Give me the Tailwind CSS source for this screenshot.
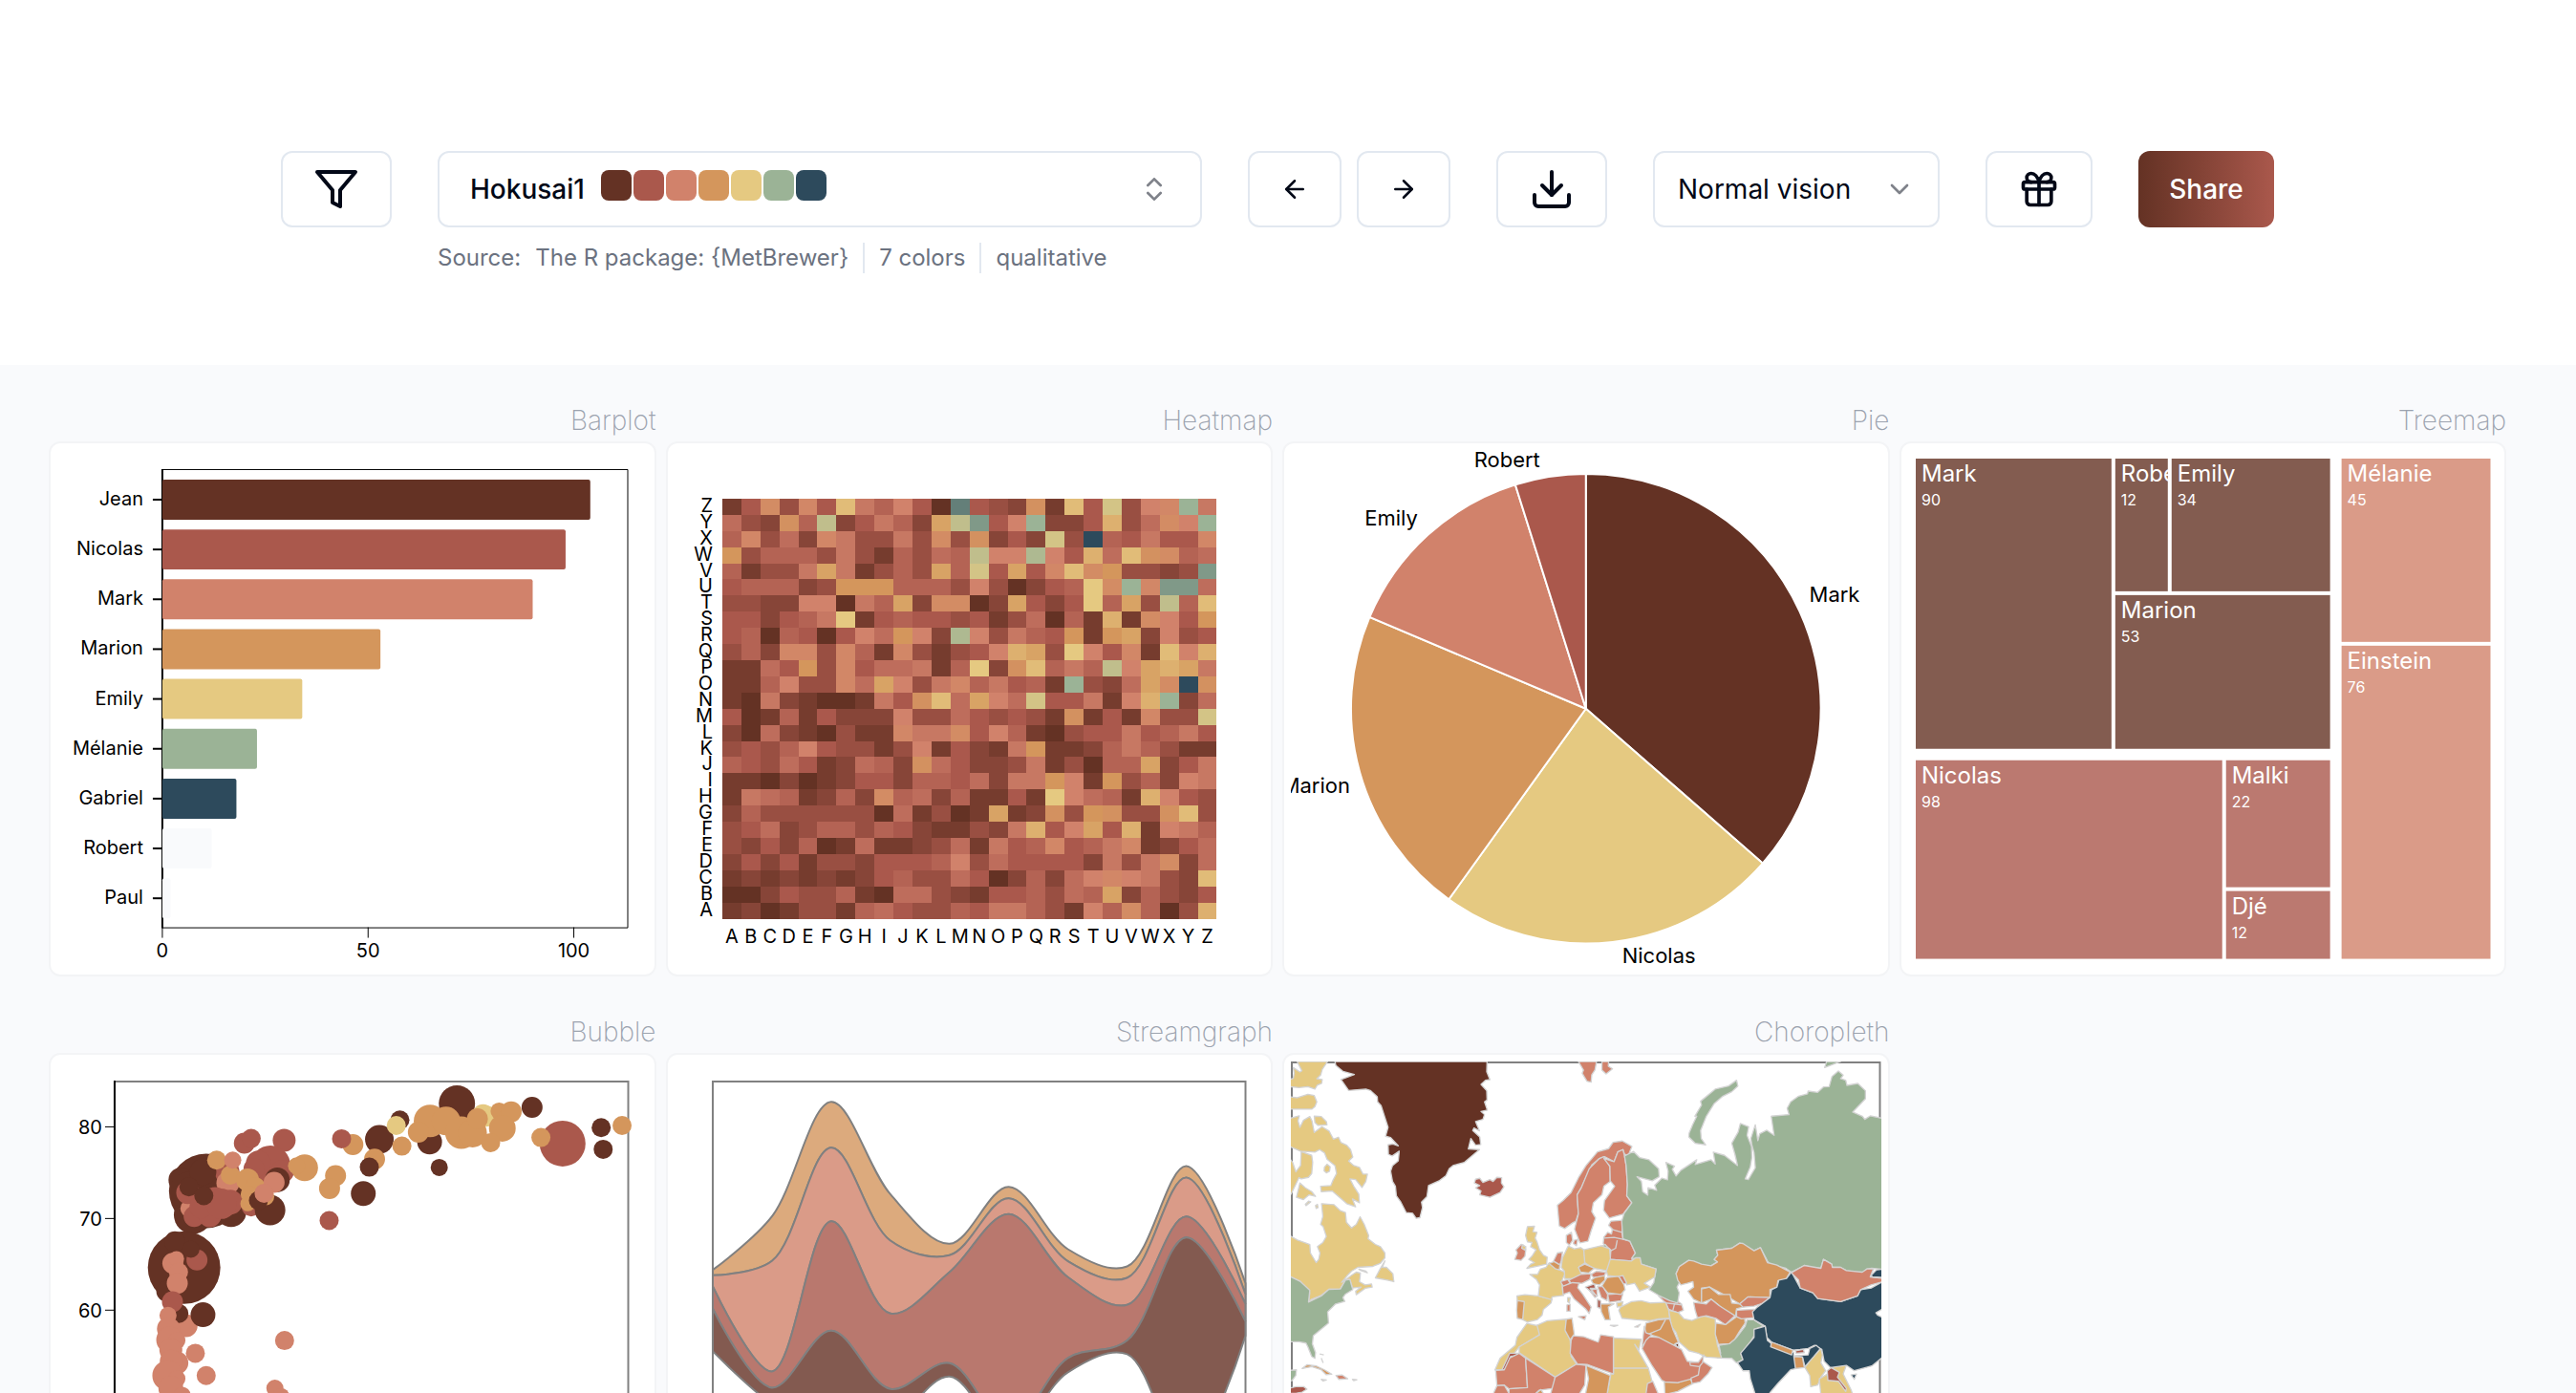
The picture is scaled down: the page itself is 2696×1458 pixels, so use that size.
<!DOCTYPE html>
<html lang="en">
  <head>
    <meta charset="UTF-8" />
    <meta name="viewport" content="width=device-width, initial-scale=1.0" />
    <title>Color Palette Finder - Hokusai1</title>
    <script src="https://cdn.jsdelivr.net/npm/@tailwindcss/browser@4"></script>
  </head>

  <body class="bg-white font-['Inter',sans-serif] text-[#020817]">
    <!-- Toolbar -->
    <header class="flex flex-wrap items-start justify-center gap-12 pt-[158px] pr-[22px] pb-24">
      <button aria-label="Filter palettes" class="flex h-20 w-[116px] items-center justify-center rounded-xl border-2 border-[#e2e8f0]">
        <svg class="size-12" viewBox="0 0 24 24" fill="none" stroke="currentColor" stroke-width="2" stroke-linecap="round" stroke-linejoin="round">
          <polygon points="22 3 2 3 10 12.46 10 19 14 21 14 12.46 22 3" />
        </svg>
      </button>

      <div class="w-[800px] max-w-full">
        <button role="combobox" aria-expanded="false" aria-label="Palette" class="flex h-20 w-full items-center justify-between rounded-xl border-2 border-[#e2e8f0] px-8">
          <span class="flex items-center gap-[17px]">
            <span class="text-[28px] leading-10 font-medium">Hokusai1</span>
            <span class="mb-2 flex gap-[2px]">
              <span class="size-8 rounded-lg bg-[#643224]"></span>
              <span class="size-8 rounded-lg bg-[#aa584c]"></span>
              <span class="size-8 rounded-lg bg-[#d1826b]"></span>
              <span class="size-8 rounded-lg bg-[#d4965c]"></span>
              <span class="size-8 rounded-lg bg-[#e5c981]"></span>
              <span class="size-8 rounded-lg bg-[#9bb396]"></span>
              <span class="size-8 rounded-lg bg-[#2d4a5c]"></span>
            </span>
          </span>
          <svg class="size-8 opacity-50" viewBox="0 0 24 24" fill="none" stroke="currentColor" stroke-width="2" stroke-linecap="round" stroke-linejoin="round">
            <path d="m7 15 5 5 5-5" />
            <path d="m7 9 5-5 5 5" />
          </svg>
        </button>
        <div class="mt-4 flex items-center gap-[15px] text-2xl leading-8 text-[#6b7280]">
          <span>Source:</span>
          <span>The R package: {MetBrewer}</span>
          <span class="h-8 w-[2px] bg-[#e2e8f0]"></span>
          <span>7 colors</span>
          <span class="h-8 w-[2px] bg-[#e2e8f0]"></span>
          <span>qualitative</span>
        </div>
      </div>

      <div class="flex gap-4">
        <button aria-label="Previous palette" class="flex h-20 w-[98px] items-center justify-center rounded-xl border-2 border-[#e2e8f0]">
          <svg class="size-[30px]" viewBox="0 0 24 24" fill="none" stroke="currentColor" stroke-width="2" stroke-linecap="round" stroke-linejoin="round">
            <path d="m12 19-7-7 7-7" />
            <path d="M19 12H5" />
          </svg>
        </button>
        <button aria-label="Next palette" class="flex h-20 w-[98px] items-center justify-center rounded-xl border-2 border-[#e2e8f0]">
          <svg class="size-[30px]" viewBox="0 0 24 24" fill="none" stroke="currentColor" stroke-width="2" stroke-linecap="round" stroke-linejoin="round">
            <path d="M5 12h14" />
            <path d="m12 5 7 7-7 7" />
          </svg>
        </button>
      </div>

      <button aria-label="Export palette" class="flex h-20 w-[116px] items-center justify-center rounded-xl border-2 border-[#e2e8f0]">
        <svg class="size-12" viewBox="0 0 24 24" fill="none" stroke="currentColor" stroke-width="2" stroke-linecap="round" stroke-linejoin="round">
          <path d="M21 15v4a2 2 0 0 1-2 2H5a2 2 0 0 1-2-2v-4" />
          <polyline points="7 10 12 15 17 10" />
          <line x1="12" x2="12" y1="15" y2="3" />
        </svg>
      </button>

      <div class="relative w-[300px]">
        <select aria-label="Color vision" class="h-20 w-full appearance-none rounded-xl border-2 border-[#e2e8f0] bg-white px-6 text-[28px]">
          <option>Normal vision</option>
          <option>Deuteranomaly</option>
          <option>Protanomaly</option>
          <option>Tritanomaly</option>
        </select>
        <svg class="pointer-events-none absolute top-6 right-[26px] size-8 opacity-50" viewBox="0 0 24 24" fill="none" stroke="currentColor" stroke-width="2" stroke-linecap="round" stroke-linejoin="round">
          <path d="m6 9 6 6 6-6" />
        </svg>
      </div>

      <button aria-label="Surprise me" class="flex h-20 w-28 items-center justify-center rounded-xl border-2 border-[#e2e8f0]">
        <svg class="size-11" viewBox="0 0 24 24" fill="none" stroke="currentColor" stroke-width="2" stroke-linecap="round" stroke-linejoin="round">
          <rect x="3" y="8" width="18" height="4" rx="1" />
          <path d="M12 8v13" />
          <path d="M19 12v7a2 2 0 0 1-2 2H7a2 2 0 0 1-2-2v-7" />
          <path d="M7.5 8a2.5 2.5 0 0 1 0-5A4.8 8 0 0 1 12 8a4.8 8 0 0 1 4.5-5 2.5 2.5 0 0 1 0 5" />
        </svg>
      </button>

      <button class="h-20 w-[142px] rounded-xl bg-linear-to-r from-[#643224] to-[#aa584c] text-[28px] font-medium text-white">Share</button>
    </header>

    <!-- Chart gallery -->
    <main class="grid grid-cols-4 gap-x-[10px] gap-y-10 bg-[#f9fafc] pt-10 pr-[73px] pb-10 pl-[51px]">
      <section>
        <h2 class="mb-1 text-right text-[28px] leading-9 font-extralight text-[#9ca3af]">Barplot</h2>
        <div class="rounded-xl border-2 border-[#f3f4f6] bg-white p-[7px]">
          <svg id="barplot" class="block w-full" viewBox="0 0 618 542" font-size="20"></svg>
        </div>
      </section>
      <section>
        <h2 class="mb-1 text-right text-[28px] leading-9 font-extralight text-[#9ca3af]">Heatmap</h2>
        <div class="rounded-xl border-2 border-[#f3f4f6] bg-white p-[7px]">
          <svg id="heatmap" class="block w-full" viewBox="0 0 618 542" font-size="20"></svg>
        </div>
      </section>
      <section>
        <h2 class="mb-1 text-right text-[28px] leading-9 font-extralight text-[#9ca3af]">Pie</h2>
        <div class="rounded-xl border-2 border-[#f3f4f6] bg-white p-[7px]">
          <svg id="pie" class="block w-full" viewBox="0 0 618 542" font-size="22"></svg>
        </div>
      </section>
      <section>
        <h2 class="mb-1 text-right text-[28px] leading-9 font-extralight text-[#9ca3af]">Treemap</h2>
        <div class="rounded-xl border-2 border-[#f3f4f6] bg-white p-[7px]">
          <svg id="treemap" class="block w-full" viewBox="0 0 618 542" fill="white"></svg>
        </div>
      </section>
      <section>
        <h2 class="mb-1 text-right text-[28px] leading-9 font-extralight text-[#9ca3af]">Bubble</h2>
        <div class="rounded-xl border-2 border-[#f3f4f6] bg-white p-[7px]">
          <svg id="bubble" class="block w-full" viewBox="0 0 618 542" font-size="20"></svg>
        </div>
      </section>
      <section>
        <h2 class="mb-1 text-right text-[28px] leading-9 font-extralight text-[#9ca3af]">Streamgraph</h2>
        <div class="rounded-xl border-2 border-[#f3f4f6] bg-white p-[7px]">
          <svg id="streamgraph" class="block w-full" viewBox="0 0 618 542"></svg>
        </div>
      </section>
      <section>
        <h2 class="mb-1 text-right text-[28px] leading-9 font-extralight text-[#9ca3af]">Choropleth</h2>
        <div class="rounded-xl border-2 border-[#f3f4f6] bg-white p-[7px]">
          <svg id="choropleth" class="block w-full" viewBox="0 0 618 542">
            <rect x="1" y="1" width="616" height="540" fill="none" stroke="#808080" stroke-width="2" />
            <!-- Atlantic side -->
            <g transform="translate(-21.5 -51) scale(.33333)" stroke="#d3d3d3" stroke-width="4" stroke-linejoin="round">
              <g fill="#e5c981">
                <path d="M84 153L99 182L93 186L72 172L75 190L72 206L60 210V232L90 235L118 232L140 240L147 228L161 222L163 210L146 207L158 196L163 178L180 153Z" />
                <path d="M60 264L85 267L118 256L138 260L146 280L140 295L130 303L60 303Z" />
                <path d="M60 332L91 324L87 340L93 360L104 338L124 326L131 340L138 376L162 358L185 372L198 397L214 391L222 408L240 416L252 430L259 453L246 466L262 480L280 486L291 507L305 507L300 530L288 549L268 524L250 522L262 545L278 570L280 597L258 585L268 610L240 600L215 578L194 560L160 562L158 545L190 543L196 528L208 505L203 480L178 460L170 440L155 430L140 438L95 435L60 420Z" />
                <path d="M138 325L160 326L176 342L178 352L150 354L140 345Z" />
                <path d="M97 436L130 448L133 470L130 505L120 517L97 522L90 518L65 570L58 570V455L70 470L80 500L95 480Z" />
                <path d="M93 535L110 550L130 562L142 577L122 572L104 587L82 580Z" />
                <path d="M170 485L178 476L188 484L186 498L176 503L169 497Z" />
                <path d="M110 602L120 592L127 594L112 606Z" />
                <path d="M142 606L148 602L150 612L144 615Z" />
                <path d="M60 700L85 714L108 722L124 728L126 755L144 785L152 775L156 755L148 735L165 722L176 703L166 672L158 665L165 640L161 600L200 603L220 622L236 628L239 658L255 676L270 665L282 641L295 665L309 700L307 710L330 728L346 735L360 755L360 770L345 788L322 797L275 800L255 812L240 828L224 847L240 836L255 825L270 815L283 818L282 832L280 845L298 855L318 852L320 862L298 866L270 886L268 875L285 862L258 865L250 838L236 840L220 868L184 869L160 888L130 900L120 909L124 880L95 845L60 828Z" />
                <path d="M360 780L352 800L365 800L385 820L388 845L368 840L330 833L345 805Z" />
                <path d="M278 806L300 812L305 817L285 810Z" />
                <path d="M808 672L830 671L825 688L838 690L832 708L838 720L846 745L858 762L870 768L868 790L845 795L806 803L818 790L830 785L812 775L822 765L835 745L818 735L822 722L808 720L802 700Z" />
                <path d="M775 890L800 886L842 890L885 900L882 912L858 932L854 950L838 965L808 972L792 964L796 908L776 905Z" />
                <path d="M815 822L840 822L848 806L866 800L876 786L900 804L928 816L916 842L918 870L922 888L885 893L884 902L842 890L846 855L836 838Z" />
                <path d="M930 745L936 733L955 742L975 738L985 745L990 785L970 798L978 825L968 836L925 835L924 812L914 800L918 770Z" />
                <path d="M806 976L842 984L846 1012L825 1025L782 1050L755 1085L748 1085L730 1122L706 1122L722 1085L770 1045L775 1020Z" />
                <path d="M838 982L870 968L930 963L928 1000L942 1025L945 1080L962 1104L895 1145L782 1068L782 1050L846 1012Z" />
              </g>
              <g fill="#9bb396">
                <path d="M60 828L95 845L124 872L120 909L160 890L184 869L220 868L236 840L250 838L259 870L235 885L228 895L234 907L205 915L180 940L183 975L135 1015L132 1040L142 1068L140 1086L130 1080L118 1050L112 1038L90 1034L60 1034Z" />
                <path d="M60 1124L82 1122L80 1140L68 1156L60 1156Z" />
              </g>
              <path fill="#643224" d="M203 153L206 166L228 184L264 194L222 210L246 244L300 240L314 244L336 264L337 280L348 292L370 360L362 388L378 392L402 418L385 412L370 415L371 445L383 450L405 435L402 465L384 480L378 498L384 530L393 545L396 575L410 595L427 628L447 630L458 646L470 644L478 612L475 595L492 578L497 543L532 527L552 512L562 490L574 480L610 470L657 430L622 428L630 395L645 416L661 414L658 390L636 370L640 362L657 371L645 342L668 335L673 320L662 310L682 306L673 280L681 274L680 245L662 225L676 212L690 210L680 185L681 153Z" />
              <g fill="#aa584c">
                <path d="M641 535L645 523L658 520L668 533L690 524L700 530L712 517L727 518L726 535L734 547L722 565L690 580L658 572L662 560L645 550L658 543Z" />
                <path d="M60 1180L80 1175L105 1175L115 1183L100 1192L80 1196H60Z" />
                <path d="M728 1122L752 1070L778 1070V1078L755 1080L745 1110L735 1122Z" />
              </g>
              <g fill="#d4965c">
                <path d="M100 1118L115 1106L145 1110L170 1122L193 1136L175 1137L160 1122L130 1112Z" />
                <path d="M776 905L798 908L793 964L776 960L774 935Z" />
                <path d="M876 788L892 782L910 792L908 808L895 804Z" />
                <path d="M930 963L948 960L955 1010L942 1028L926 998Z" />
              </g>
              <g fill="#d1826b">
                <path d="M206 1140L225 1138L243 1150L215 1152Z" />
                <path d="M160 1152L176 1154L165 1157Z" />
                <path d="M258 1152L272 1153L262 1156Z" />
                <path d="M160 1085L166 1100M155 1072L168 1075" />
                <path d="M795 730L788 728L772 745L776 755L768 775L788 778L800 765L803 742Z" />
                <path fill="#e5c981" d="M792 730L803 735L800 746L790 740Z" />
                <path d="M890 780L902 755L918 752L914 780L910 792Z" />
                <path d="M930 700L946 690L950 715L940 730L930 722Z" />
                <path d="M955 715L966 712L962 732L952 725Z" />
                <path d="M708 1124L735 1122L752 1085L782 1070L802 1085L808 1178L750 1182L735 1170L712 1172Z" />
                <path d="M802 1085L895 1145L890 1180L845 1186L830 1200H750V1182L808 1178Z" />
                <path d="M702 1194L712 1172L735 1170L752 1200H702Z" />
                <path fill="#d4965c" d="M830 1200L850 1184L860 1200Z" />
              </g>
            </g>
            <!-- Eurasia and Africa -->
            <g transform="translate(288.5 -51) scale(.33333)" stroke="#d3d3d3" stroke-width="4" stroke-linejoin="round">
              <g fill="#d1826b">
                <path d="M-228 1200L-200 1290L-130 1320L-40 1310L0 1400L40 1700L110 1720L200 1560L230 1420L330 1250L260 1200Z" />
                <path d="M-35 1145L32 1104L62 1108L58 1170L40 1200H-50Z" />
                <path d="M176 403L206 420L195 448L183 445L178 430L162 437L150 468L120 452L104 458L80 478L70 500L48 548L34 572L38 630L30 655L20 660L-5 678L-22 670L-28 605L-10 590L15 565L40 515L62 480L98 437L133 427L147 407Z" />
                <path d="M118 452L137 484L138 530L118 545L112 572L85 597L80 625L92 645L78 685L68 718L43 723L26 680L38 632L34 572L48 548L72 490L104 458Z" />
                <path d="M183 450L188 480L192 540L190 575L206 597L178 633L135 645L117 620L120 590L152 545L138 528L137 482L118 458L150 468L162 437L178 430Z" />
                <path d="M38 153H95L90 180L80 195L78 218L65 215L50 190L54 180Z" />
                <path d="M112 153H133L132 168L145 176L125 192L112 180Z" />
                <path d="M140 655L178 652L175 690L178 712L200 718L217 755L205 780L138 775L140 745L116 725L118 705L130 690L142 695L145 680L133 668Z" />
                <path fill="none" d="M142 680L175 690M118 708L150 706L178 712M160 715L155 740L140 748" />
                <path d="M8 840L45 822L78 820L74 838L50 850L15 850Z" />
                <path d="M78 822L95 812L124 815L120 828L85 832Z" />
                <path d="M130 885L178 882L172 905L135 910Z" />
                <path d="M98 860L115 860L130 885L128 905L110 895Z" />
                <path d="M72 872L96 868L98 890L90 895Z" />
                <path d="M-18 845L5 838L12 850L-8 862Z" />
                <path d="M-12 860L20 848L40 850L36 864L52 885L78 925L72 945L60 930L25 900L10 878L-10 885Z" />
                <path d="M38 955L62 952L58 965Z" />
                <path d="M2 918L12 916L12 938L2 938Z" />
                <path d="M290 890L340 900L362 915L368 935L350 942L322 932L312 912Z" />
                <path fill="none" d="M312 912L340 915L335 935M340 915L362 918" />
              </g>
              <g fill="#9bb396">
                <path d="M535 212L539 230L520 248L492 262L465 285L440 325L422 370L424 395L438 415L405 410L385 390L386 378L397 352L410 325L404 325L425 290L422 278L468 240L510 230Z" />
                <path d="M211 436L230 455L260 462L290 490L292 515L270 528L222 515L236 530L240 562L256 573L257 550L284 558L278 542L300 520L318 525L320 498L313 470L340 482L333 492L345 513L360 495L410 462L405 477L455 462L468 475L462 438L497 448L538 480L530 445L520 410L540 375L547 348L573 358L568 385L582 420L583 455L578 485L562 522L572 524L594 487L590 440L583 415L580 395L594 352L602 402L608 380L630 369L653 385L644 325L700 320L694 300L705 280L730 262L758 255L760 246L790 250L808 233L826 232L835 200L855 183L870 196L862 207L878 212L882 228L916 222L940 245L940 270L900 312L930 325L938 335L955 324L995 332V806L960 803L945 805L930 818L880 810L862 800L836 800L834 790L808 775L800 803L770 800L748 794L707 815L690 803L640 790L632 780L610 738L590 748L545 724L520 740L472 746L476 762L465 775L475 783L455 795L400 792L385 778L355 798L345 820L360 840L348 862L355 880L350 912L325 905L290 888L260 870L275 848L282 805L235 790L230 772L205 772L217 755L200 718L178 710L174 655L182 630L206 597L190 575L192 540L188 480L183 450Z" />
                <path d="M818 153L812 172L862 153Z" />
                <path d="M103 738L122 728L130 738Z" />
                <path d="M480 1045L512 1040L535 1020L562 985L568 965L590 965L620 985L590 995L590 1015L570 1050L548 1070L555 1090L535 1100L520 1086L475 1085L485 1070Z" />
              </g>
              <g fill="#e5c981">
                <path d="M55 745L110 732L136 742L140 790L126 810L85 803L58 785Z" />
                <path d="M126 812L138 775L205 780L218 770L232 770L236 790L282 805L278 830L245 850L265 862L230 875L215 850L190 855L178 828L165 830L130 826Z" />
                <path d="M4 895L12 895L10 912L4 908Z" />
                <path d="M165 935L170 925L205 908L235 905L265 912L312 910L322 935L325 960L290 962L262 968L220 965L175 960Z" />
                <path d="M158 912L178 908L175 922L160 925Z" />
                <path d="M322 935L352 942L370 962L395 967L430 952L468 962L470 1015L475 1045L488 1085L440 1082L415 1070L385 1062L355 1035L345 1005L330 985Z" />
                <path d="M148 1022L235 1026L228 1060L215 1042L258 1117H148Z" />
                <path d="M148 1117H258L270 1160L250 1200H128L140 1135H148Z" />
                <path d="M800 1055L805 1075L800 1100L815 1125L800 1145L790 1170L768 1175L765 1140L750 1115L770 1085Z" />
                <path d="M795 1150L830 1130L845 1105L880 1108L870 1135L895 1185L900 1200H800Z" />
              </g>
              <g fill="#d4965c">
                <path d="M38 800L58 790L88 803L70 818L45 815Z" />
                <path d="M78 840L90 832L120 826L122 840L105 855L85 852Z" />
                <path d="M112 858L128 832L165 828L180 850L185 870L172 885L130 880Z" />
                <path fill="#d1826b" d="M165 828L178 826L190 850L180 852Z" />
                <path d="M108 915L150 915L132 925L138 965L122 965L110 940Z" />
                <path d="M345 820L355 798L385 778L400 780L425 790L455 795L475 783L465 775L476 762L472 746L520 740L545 724L555 725L590 748L610 738L632 785L662 793L703 815L690 838L665 842L662 862L640 870L640 895L575 893L545 915L500 888L450 862L425 865V912L400 900L382 875L400 862L398 845L380 850L360 855L350 840Z" />
                <path d="M425 912V868L450 862L478 885L515 885L520 912L545 915L572 900L575 920L535 930L532 955L495 935L478 918L455 900Z" />
                <path d="M250 975L290 965L325 962L335 995L352 1035L335 1045L290 1020L258 1010L245 1005Z" />
                <path fill="none" d="M312 964L295 995L258 1010" />
                <path d="M308 1160L350 1162L388 1148L398 1165L350 1190L310 1200Z" />
                <path d="M470 975L500 980L535 955L560 955L562 975L545 1000L530 1025L512 1040L478 1042L468 1010Z" />
                <path d="M62 1108L138 1140L128 1200H60L70 1150Z" />
              </g>
              <g fill="#d1826b">
                <path d="M400 910L440 915L455 900L480 920L530 952L500 980L470 960L440 952L412 958L405 935Z" />
                <path d="M545 915L570 893L640 895L620 912L590 922L555 925Z" />
                <path d="M535 935L590 932L592 958L550 962L535 955Z" />
                <path d="M238 1050L245 985L250 1005L268 1012Z" />
                <path d="M262 1018L290 1020L340 1046L362 1058L380 1095L425 1100L415 1138L395 1150L350 1162L310 1160L300 1155L270 1110L238 1055L250 1030Z" />
                <path d="M395 1165L392 1148L415 1138L420 1105L428 1095L458 1115L445 1135L420 1160Z" />
                <path d="M388 1098L415 1098L432 1075L428 1100L418 1112L390 1108Z" />
                <path d="M15 1030L22 1015L55 1018L100 1035L108 1012L148 1018V1135L65 1105L35 1104L12 1070Z" />
                <path d="M255 1165L272 1158L290 1200H250Z" />
                <path d="M215 987L233 979L225 988Z" />
                <path d="M138 982H162L150 986Z" />
              </g>
              <g fill="#2d4a5c">
                <path d="M707 815L712 822L735 865L775 880L790 898L862 908L915 890L925 870L958 865L995 845V1082L960 1110L905 1125L880 1108L830 1115L810 1095L803 1058L780 1045L760 1055L735 1058L712 1060L645 1035L630 1020L625 985L590 965L585 940L600 925L640 895L645 870L662 862L668 840L692 835Z" />
                <path d="M590 995L625 985L632 1030L645 1040L715 1068L715 1078L760 1075L765 1055L785 1045L798 1056L778 1080L750 1112L742 1082L718 1080L722 1118L705 1122L665 1165L640 1194L615 1300L592 1194L578 1150L575 1125L555 1125L538 1100L555 1090L548 1070L590 1020Z" />
                <path d="M895 1138L912 1135L905 1152Z" />
              </g>
              <path fill="#d1826b" d="M707 817L748 794L800 803L808 775L834 790L836 800L862 800L880 810L930 815L945 805L965 805L955 830L995 835V845L958 855L925 870L915 890L862 908L790 898L775 880L735 865L730 840Z" />
              <path fill="#2d4a5c" d="M958 825L975 808L995 806V832L962 830Z" />
              <path fill="white" d="M973 943L995 930V958L978 950Z" />
              <path fill="#d4965c" d="M645 1035L712 1060L708 1075L642 1050Z" />
              <path fill="#d4965c" d="M715 1080L742 1082L748 1115L720 1118Z" />
              <g fill="#aa584c">
                <path d="M720 1062L745 1058L748 1068L722 1070Z" />
                <path d="M820 1125L832 1115L858 1130L852 1145L880 1180L878 1190L855 1158L822 1155Z" />
                <path d="M60 862L88 852L92 866L75 866L95 890Z" />
                <path d="M98 900L108 905V930L98 925Z" />
              </g>
              <path fill="#643224" d="M343 1040H352L354 1050L346 1048Z" />
            </g>
          </svg>
        </div>
      </section>
    </main>

    <script>
      const palette = ["#643224", "#aa584c", "#d1826b", "#d4965c", "#e5c981", "#9bb396", "#2d4a5c"];
      const draw = (id, markup) => (document.getElementById(id).innerHTML = markup);

      // Barplot
      function drawBarplot() {
        const bars = [["Jean", 104], ["Nicolas", 98], ["Mark", 90], ["Marion", 53], ["Emily", 34], ["Mélanie", 23], ["Gabriel", 18], ["Robert", 12], ["Paul", 2]];
        const x = (v) => 110 + v * 4.31;
        let out = `<path d="M110 20.5H597.5V500.5H110" fill="none" stroke="black"/><path d="M110 20V501" stroke="black" stroke-width="2"/>`;
        bars.forEach(([name, value], i) => {
          const y = 31 + i * 52.2;
          out += `<rect x="110" y="${y}" width="${x(value) - 110}" height="42" rx="2" fill="${palette[i] || "#f9fafc"}"/>`;
          out += `<path d="M100 ${y + 21}H110" stroke="black" stroke-width="2"/>`;
          out += `<text x="90" y="${y + 27}" text-anchor="end">${name}</text>`;
        });
        [0, 50, 100].forEach((v) => {
          out += `<path d="M${x(v)} 500V511" stroke="black"/><text x="${x(v)}" y="531" text-anchor="middle">${v}</text>`;
        });
        draw("barplot", out);
      }

      // Heatmap, one letter per cell: a = first color of the palette, y = last one
      const cells = [
        "bekdjephfieawedclbperdijuh",
        "gdclfscehfcnsveiucceodgkiu",
        "fjdgcjhddhdkdlcecrdyfeheej",
        "mdfffdhdbfdgfsiitieogplkfg",
        "fbddhnhbdfdnfrenejpkmddcdv",
        "efffcdmmmfffdidacefqkujvvg",
        "ddcciiahfnckkacneceqfndsfp",
        "eecefhqbefeedebdgafbobkiem",
        "efafeaeigmictidhfembmncide",
        "dfcjjdjfbjdbdeiondqiejbpio",
        "bbgemdjegghbfqclpfhfsinonh",
        "bbfiddjgnidhjfhefbudcgnkyl",
        "bahcbaabhelpgnigreehbioucg",
        "eabfbeccciddgededblbebjddr",
        "cagcbadbbjhhkeifbadeehefhe",
        "dedfieddbdibecbhmbbcfhfdbb",
        "fedgebcgfclgeccdhbdaffnceh",
        "bbacabceecffegchhmibmdfcih",
        "bhgfbcfckfgcfbbebqigfboied",
        "cfddddddagbdabnbcldmlddlpd",
        "degcdffdfecbbdchoeineobihf",
        "dcecfabgbbcdgbhefjefhjbceg",
        "cecebddceeefidgeeeechdhkcg",
        "bcbcbcbcefddgeacfcgijihdcp",
        "aaceddfbaggdcbeefdgfncfdce",
        "bcabddbfgeddfehhfdbifkfado",
      ];
      function cellColor(letter) {
        const t = (letter.charCodeAt(0) - 97) / 4;
        const i = Math.min(Math.floor(t), 5);
        const rgb = (c) => [1, 3, 5].map((k) => parseInt(c.slice(k, k + 2), 16));
        const [from, to] = [rgb(palette[i]), rgb(palette[i + 1])];
        return `rgb(${from.map((v, k) => Math.round(v + (to[k] - v) * (t - i))).join(",")})`;
      }
      function drawHeatmap() {
        const letters = "ABCDEFGHIJKLMNOPQRSTUVWXYZ";
        const [left, top, w, h] = [50, 51, 19.92, 16.92];
        let out = "";
        cells.forEach((row, r) => {
          [...row].forEach((c, i) => {
            out += `<rect x="${left + i * w}" y="${top + r * h}" width="${w}" height="${h}" fill="${cellColor(c)}" shape-rendering="crispEdges"/>`;
          });
          out += `<text x="40" y="${top + r * h + 14}" text-anchor="end">${letters[25 - r]}</text>`;
          out += `<text x="${left + (r + 0.5) * w}" y="516" text-anchor="middle">${letters[r]}</text>`;
        });
        draw("heatmap", out);
      }

      // Pie
      function drawPie() {
        const slices = [
          { name: "Mark", value: 90, color: palette[0], x: 543, y: 159, anchor: "start" },
          { name: "Nicolas", value: 58, color: palette[4], x: 347, y: 537, anchor: "start" },
          { name: "Marion", value: 53, color: palette[3], x: 62, y: 359, anchor: "end" },
          { name: "Emily", value: 34, color: palette[2], x: 133, y: 79, anchor: "end" },
          { name: "Robert", value: 12, color: palette[1], x: 261, y: 18, anchor: "end" },
        ];
        const total = 247;
        const point = (a) => `${309 + 246 * Math.sin(a)} ${271 - 246 * Math.cos(a)}`;
        let angle = 0;
        let out = "";
        slices.forEach((s) => {
          const end = angle + (s.value / total) * 2 * Math.PI;
          out += `<path d="M309 271L${point(angle)}A246 246 0 0 1 ${point(end)}Z" fill="${s.color}" stroke="white" stroke-width="2"/>`;
          out += `<text x="${s.x}" y="${s.y}" text-anchor="${s.anchor}">${s.name}</text>`;
          angle = end;
        });
        draw("pie", out);
      }

      // Treemap: name, value, x, y, right, bottom, color
      function drawTreemap() {
        const [brown, red, salmon] = ["#835c50", "#bb7970", "#da9b88"];
        const leaves = [
          ["Mark", 90, 8, 9, 213, 313, brown],
          ["Robert", 12, 217, 9, 272, 148, brown],
          ["Emily", 34, 276, 9, 442, 148, brown],
          ["Marion", 53, 217, 152, 442, 313, brown],
          ["Nicolas", 98, 8, 325, 329, 533, red],
          ["Malki", 22, 333, 325, 442, 458, red],
          ["Djé", 12, 333, 462, 442, 533, red],
          ["Mélanie", 45, 454, 9, 610, 201, salmon],
          ["Einstein", 76, 454, 205, 610, 533, salmon],
        ];
        draw("treemap", leaves.map(([name, value, x, y, right, bottom, color]) => `
          <rect x="${x}" y="${y}" width="${right - x}" height="${bottom - y}" fill="${color}"/>
          <text x="${x + 6}" y="${y + 24}" font-size="24">${name}</text>
          <text x="${x + 6}" y="${y + 49}" font-size="16">${value}</text>`).join(""));
      }

      // Bubble: x, y, radius, index in the palette
      const bubbles = [
        [418, 560, 39, 0], [385, 635, 20, 0], [355, 525, 13, 0], [480, 625, 16, 0], [375, 560, 20, 0],
        [363, 801, 38, 0], [340, 720, 11, 0], [320, 875, 11, 0],
        [375, 615, 9, 2], [470, 500, 13, 1], [472, 535, 12, 2], [372, 565, 12, 1], [440, 590, 14, 1], [388, 640, 11, 1], [427, 638, 12, 1], [478, 595, 13, 1], [405, 610, 12, 1], [455, 600, 16, 1],
        [410, 500, 14, 0], [375, 547, 10, 0], [412, 575, 10, 0],
        [513, 410, 11, 1], [530, 395, 10, 1], [612, 401, 12, 1], [578, 480, 21, 1], [548, 472, 13, 1], [537, 490, 11, 1], [608, 498, 12, 1], [530, 610, 10, 1],
        [478, 510, 10, 3], [444, 463, 10, 3], [484, 463, 9, 2],
        [521, 525, 12, 3], [540, 550, 11, 3], [522, 600, 8, 3], [525, 570, 9, 3],
        [595, 525, 13, 0], [577, 620, 16, 0], [566, 578, 9, 3], [548, 590, 10, 0], [587, 533, 11, 2], [562, 567, 10, 2],
        [663, 487, 14, 3], [643, 481, 9, 3], [740, 512, 11, 3], [725, 552, 11, 3], [724, 653, 10, 1], [809, 568, 13, 0],
        [783, 414, 11, 3], [755, 396, 10, 1], [849, 398, 15, 0], [837, 460, 11, 3], [824, 485, 10, 0], [905, 419, 10, 3], [900, 337, 10, 0], [891, 354, 10, 4],
        [1042, 285, 19, 0], [1107, 320, 11, 4], [1115, 325, 11, 4], [974, 406, 13, 0],
        [975, 340, 17, 3], [1015, 340, 15, 3], [1053, 377, 17, 3], [1081, 378, 15, 3], [1093, 333, 11, 3], [946, 375, 11, 3], [998, 486, 9, 0],
        [1147, 309, 9, 3], [1177, 311, 11, 3], [1155, 363, 14, 3], [1126, 408, 10, 3], [1229, 297, 11, 0], [1305, 411, 24, 1], [1251, 392, 10, 3], [1401, 361, 10, 0], [1406, 429, 10, 0], [1453, 354, 10, 3],
        [395, 777, 11, 1], [335, 787, 11, 2], [344, 773, 8, 2], [349, 815, 10, 2], [346, 850, 11, 2], [380, 743, 9, 0],
        [368, 983, 12, 2], [350, 945, 10, 0], [334, 908, 11, 1], [410, 949, 13, 0],
        [323, 951, 9, 2], [324, 993, 12, 2], [327, 1028, 14, 2], [345, 1030, 9, 2], [330, 1060, 12, 2], [345, 1100, 12, 2], [331, 1095, 12, 2], [322, 1140, 16, 2], [345, 1150, 9, 2], [330, 1180, 13, 2], [358, 1202, 9, 2],
        [391, 1070, 10, 2], [418, 1140, 10, 2], [613, 1030, 10, 2], [589, 1180, 9, 2], [604, 1206, 9, 2],
      ];
      function drawBubble() {
        let out = `<path d="M60 21H598V500H60" fill="none" stroke="#808080" stroke-width="2"/><path d="M60 20V501" stroke="black" stroke-width="2"/>`;
        [80, 70, 60, 50].forEach((v, i) => {
          const y = 68 + i * 96;
          out += `<path d="M50 ${y + 0.5}H60" stroke="black"/><text x="47" y="${y + 8}" text-anchor="end">${v}</text>`;
        });
        bubbles.forEach(([x, y, r, c]) => {
          out += `<circle cx="${x / 2.376 - 20}" cy="${y / 3 - 51}" r="${r}" fill="${palette[c]}"/>`;
        });
        draw("bubble", out);
      }

      // Streamgraph
      // Centripetal Catmull-Rom spline through the points
      function spline(points) {
        const dist = (a, b) => Math.hypot(a[0] - b[0], a[1] - b[1]);
        let d = "";
        for (let i = 0; i < points.length - 1; i++) {
          const p0 = points[i - 1] || points[i];
          const p1 = points[i];
          const p2 = points[i + 1];
          const p3 = points[i + 2] || p2;
          const [d01, d12, d23] = [dist(p0, p1), dist(p1, p2), dist(p2, p3)];
          const [s01, s12, s23] = [d01, d12, d23].map(Math.sqrt);
          let c1 = p1;
          let c2 = p2;
          if (d01) {
            const a = 2 * d01 + 3 * s01 * s12 + d12;
            c1 = [0, 1].map((k) => (p1[k] * a - p0[k] * d12 + p2[k] * d01) / (3 * s01 * (s01 + s12)));
          }
          if (d23) {
            const b = 2 * d23 + 3 * s23 * s12 + d12;
            c2 = [0, 1].map((k) => (p2[k] * b + p1[k] * d23 - p3[k] * d12) / (3 * s23 * (s23 + s12)));
          }
          d += `C${c1} ${c2} ${p2}`;
        }
        return d;
      }
      function drawStreamgraph() {
        const edges = [
          [808, 640, 280, 570, 726, 547, 743, 797, 482, 850],
          [825, 780, 424, 716, 762, 583, 781, 833, 518, 885],
          [860, 1127, 655, 945, 815, 633, 831, 918, 640, 915],
          [930, 1178, 999, 1182, 1101, 1300, 1085, 1030, 706, 970],
          [1064, 1230, 1330, 1290, 1143, 1330, 1130, 1073, 1400, 1015],
        ].map((edge) => edge.map((y, i) => [40 + i * 62, y / 3 - 51]));
        const colors = ["#dcaa7d", "#da9b88", "#b9786e", "#835a50"];
        let out = `<rect x="40" y="21" width="558" height="480" fill="none" stroke="#808080" stroke-width="2"/>`;
        colors.forEach((color, i) => {
          const upper = edges[i];
          const lower = [...edges[i + 1]].reverse();
          out += `<path d="M${upper[0]}${spline(upper)}L${lower[0]}${spline(lower)}Z" fill="${color}" stroke="#808080" stroke-width="2"/>`;
        });
        draw("streamgraph", out);
      }

      drawBarplot();
      drawHeatmap();
      drawPie();
      drawTreemap();
      drawBubble();
      drawStreamgraph();
    </script>
  </body>
</html>
